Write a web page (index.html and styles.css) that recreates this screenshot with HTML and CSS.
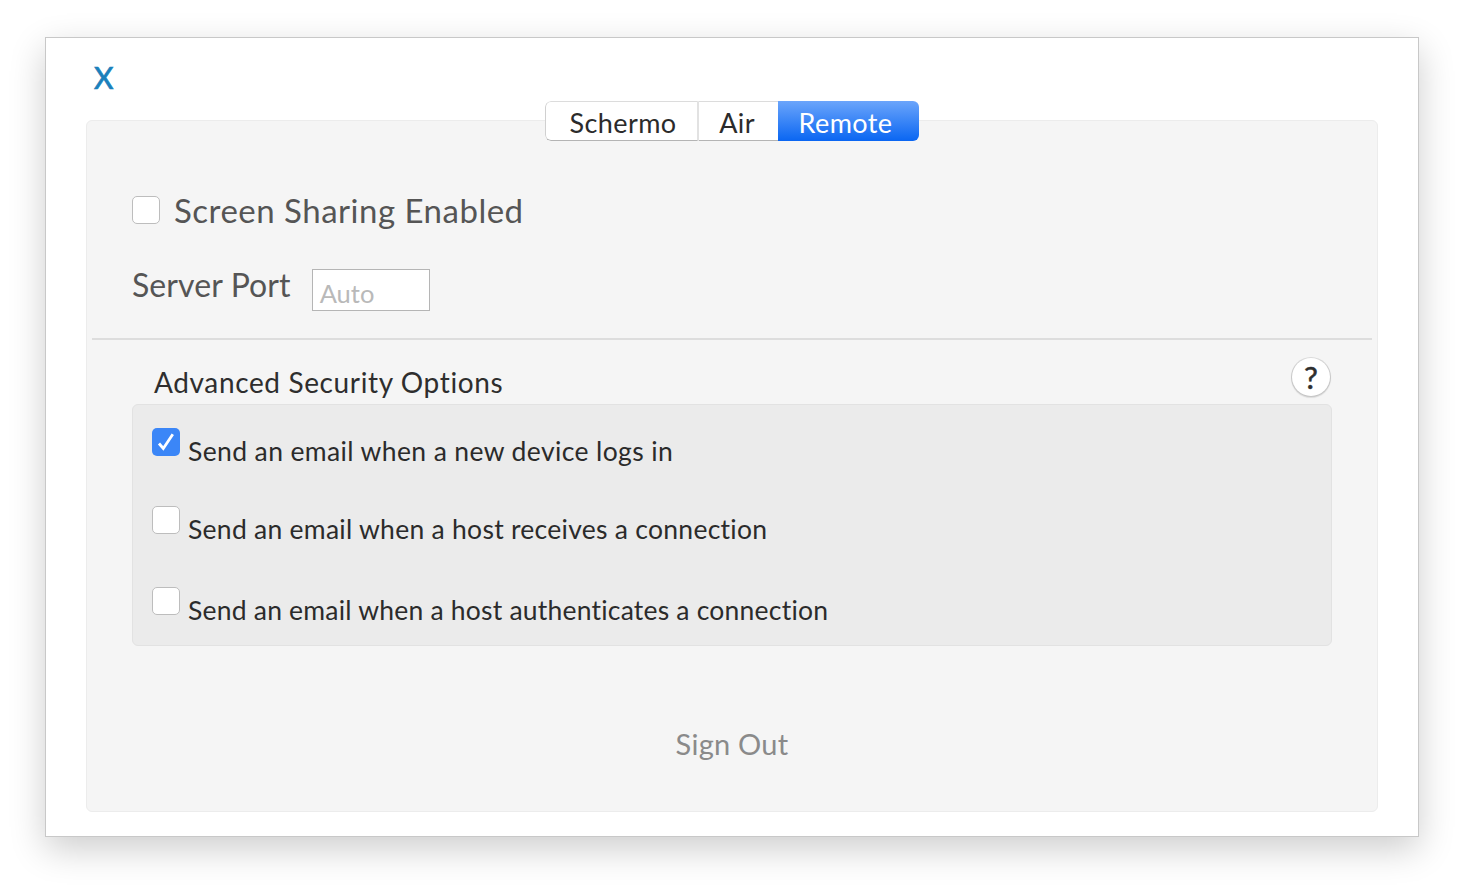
FILE: index.html
```html
<!DOCTYPE html>
<html lang="en">
<head>
  <meta charset="UTF-8">
  <title>Remote Settings</title>
  <link rel="stylesheet" href="styles.css">
</head>
<body>
  <div class="window">
    <div class="close">X</div>
    <div class="panel">
      <div class="tabs">
        <div class="tab tab-screen">Schermo</div>
        <div class="tab tab-air">Air</div>
        <div class="tab tab-remote active">Remote</div>
      </div>

      <label class="sharing">
        <span class="check"></span>
        <span class="sharing-text">Screen Sharing Enabled</span>
      </label>

      <div class="port">
        <span>Server Port</span>
        <div class="port-input">Auto</div>
      </div>

      <div class="divider"></div>

      <div class="advanced-head">
        <span class="advanced-title">Advanced Security Options</span>
        <div class="help">?</div>
      </div>

      <div class="options">
        <label class="option option-first">
          <span class="check checked">
            <svg width="28" height="28" viewBox="0 0 28 28"><path d="M7 15.5 L11.3 20.5 L20.8 6.2" fill="none" stroke="#fff" stroke-width="2.8"/></svg>
          </span>
          <span class="option-text">Send an email when a new device logs in</span>
        </label>
        <label class="option option-second">
          <span class="check"></span>
          <span class="option-text">Send an email when a host receives a connection</span>
        </label>
        <label class="option option-third">
          <span class="check"></span>
          <span class="option-text">Send an email when a host authenticates a connection</span>
        </label>
      </div>

      <div class="sign-out">Sign Out</div>
    </div>
  </div>
</body>
</html>
```

FILE: styles.css
```css
body {
  font-family: Lato, "Open Sans", sans-serif;
  background: #fff;
  margin: 0;
  padding: 37px 45px 0;
  height: 890px;
  box-sizing: border-box;
  overflow: hidden;
}

.window {
  width: 1374px;
  height: 800px;
  box-sizing: border-box;
  background: #fff;
  border: 1px solid #c8c8c8;
  box-shadow: 0 12px 34px rgba(0, 0, 0, 0.2);
  padding: 0 40px;
}

.close {
  color: #1a80bb;
  font-size: 30px;
  line-height: 40px;
  margin: 19px 0 0 8px;
  height: 63px;
  -webkit-text-stroke: 0.7px #1a80bb;
}

.panel {
  height: 692px;
  box-sizing: border-box;
  background: #f5f5f5;
  border: 1px solid #ececec;
  border-radius: 6px;
  padding: 0 5px;
}

.tabs {
  display: flex;
  width: 374px;
  height: 40px;
  margin: -20px auto 0;
  background: #fff;
  border-radius: 6px;
  overflow: hidden;
  font-size: 27px;
  letter-spacing: 0.4px;
  color: #2b2b2b;
}

.tab {
  text-align: center;
  line-height: 42px;
  box-sizing: border-box;
  border-top: 1px solid #dcdcdc;
  border-bottom: 1px solid #b4b4b4;
}

.tab-screen {
  width: 154px;
  padding-left: 3px;
  border-left: 1px solid #d0d0d0;
  border-right: 2px solid #e2e2e2;
  border-radius: 6px 0 0 6px;
}

.tab-air {
  width: 79px;
  padding-right: 3px;
}

.tab-remote {
  width: 141px;
  padding-right: 6px;
}

.tab.active {
  color: #fff;
  border: none;
  padding-top: 1px;
  background: linear-gradient(to bottom, #6ba5fb, #0a66f2);
}

.check {
  display: block;
  flex-shrink: 0;
  width: 28px;
  height: 28px;
  box-sizing: border-box;
  background: #fff;
  border: 1px solid #bdbdbd;
  border-radius: 5px;
}

.check.checked {
  background: #3b86f7;
  border: none;
}

.check svg {
  display: block;
}

.sharing {
  display: flex;
  align-items: center;
  gap: 14px;
  margin: 55px 0 0 40px;
  height: 28px;
  font-size: 33px;
  letter-spacing: 0.5px;
  color: #555;
}

.sharing-text {
  line-height: 26px;
}

.port {
  display: flex;
  margin: 45px 0 0 40px;
  font-size: 32px;
  letter-spacing: 0.1px;
  color: #555;
  height: 42px;
}

.port span {
  line-height: 32px;
}

.port-input {
  width: 118px;
  height: 42px;
  box-sizing: border-box;
  margin-left: 21px;
  background: #fff;
  border: 1px solid #b5b5b5;
  padding-left: 7px;
  font-size: 25.5px;
  letter-spacing: 0;
  line-height: 46px;
  color: #b9b9b9;
}

.divider {
  height: 2px;
  background: #ddd;
  margin-top: 27px;
}

.advanced-head {
  display: flex;
  justify-content: space-between;
  height: 64px;
  margin: 0 42px 0 62px;
  font-size: 28px;
  color: #2e2e2e;
}

.advanced-title {
  line-height: 85px;
  letter-spacing: 0.63px;
}

.help {
  width: 38px;
  height: 38px;
  margin-top: 18px;
  background: #fff;
  border-radius: 50%;
  box-shadow: 0 0 0 1px rgba(0, 0, 0, 0.1), 0 1px 1px 1px rgba(0, 0, 0, 0.1);
  text-align: center;
  font-size: 31px;
  line-height: 38px;
  -webkit-text-stroke: 0.5px #2e2e2e;
}

.options {
  height: 242px;
  box-sizing: border-box;
  margin: 0 40px;
  padding: 23px 19px 0;
  background: #ebebeb;
  border: 1px solid #e2e2e2;
  border-radius: 6px;
}

.option {
  display: flex;
  gap: 8px;
  font-size: 26.5px;
  letter-spacing: 0.27px;
  color: #2b2b2b;
  height: 28px;
}

.option-first {
  letter-spacing: 0.38px;
}

.option-second {
  margin-top: 50px;
}

.option-third {
  margin-top: 53px;
  letter-spacing: 0.21px;
}

.option-text {
  line-height: 46px;
  white-space: nowrap;
}

.sign-out {
  text-align: center;
  margin-top: 80px;
  font-size: 29px;
  letter-spacing: 0.25px;
  line-height: 36px;
  color: #8a8a8a;
}
```
